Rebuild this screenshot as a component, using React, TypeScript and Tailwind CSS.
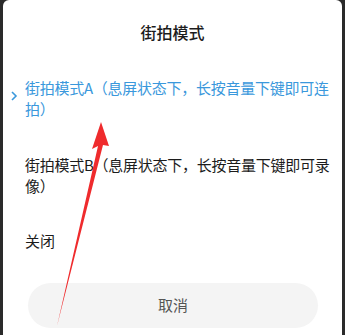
import React from "react";

const font = { fontFamily: '"Noto Sans CJK SC", "Noto Sans", sans-serif' };

export default function App() {
  return (
    <div className="relative w-[345px] h-[335px] bg-[#2a2a2a] overflow-hidden" style={font}>
      <div className="mx-[3px] h-full bg-white rounded-t-[6px] flex flex-col">
        {/* Title */}
        <div className="pt-[19px] text-center text-[16px] leading-[26px] font-medium text-[#1c1c1c]">
          街拍模式
        </div>

        {/* Options */}
        <div className="mt-[32px] flex flex-col">
          <div className="relative pl-[22px] pr-[3px] text-[15px] leading-[21px] tracking-[-0.25px] text-[#3a98dc]">
            <svg className="absolute left-[7px] top-[13px]" width="8" height="12" viewBox="0 0 8 12">
              <path d="M2 2 L6 6 L2 10" fill="none" stroke="#3a98dc" strokeWidth="1.6" />
            </svg>
            街拍模式A（息屏状态下，长按音量下键即可连拍）
          </div>
          <div className="mt-[35px] pl-[22px] pr-[3px] text-[15px] leading-[21px] tracking-[-0.25px] text-[#1c1c1c]">
            街拍模式B（息屏状态下，长按音量下键即可录像）
          </div>
          <div className="mt-[34px] pl-[22px] text-[15px] leading-[21px] text-[#1c1c1c]">关闭</div>
        </div>

        {/* Cancel */}
        <div className="mt-auto mb-[7px] ml-[25px] mr-[24px] h-[45px] rounded-full bg-[#f4f4f4] flex items-center justify-center text-[15px] text-[#555]">
          取消
        </div>
      </div>

      {/* Red annotation arrow */}
      <svg className="absolute left-0 top-0 pointer-events-none" width="345" height="335" viewBox="0 0 345 335">
        <polygon points="101,122 92,149 98,146 57,326 103,145 109,146" fill="#ef2b2d" />
      </svg>
    </div>
  );
}
